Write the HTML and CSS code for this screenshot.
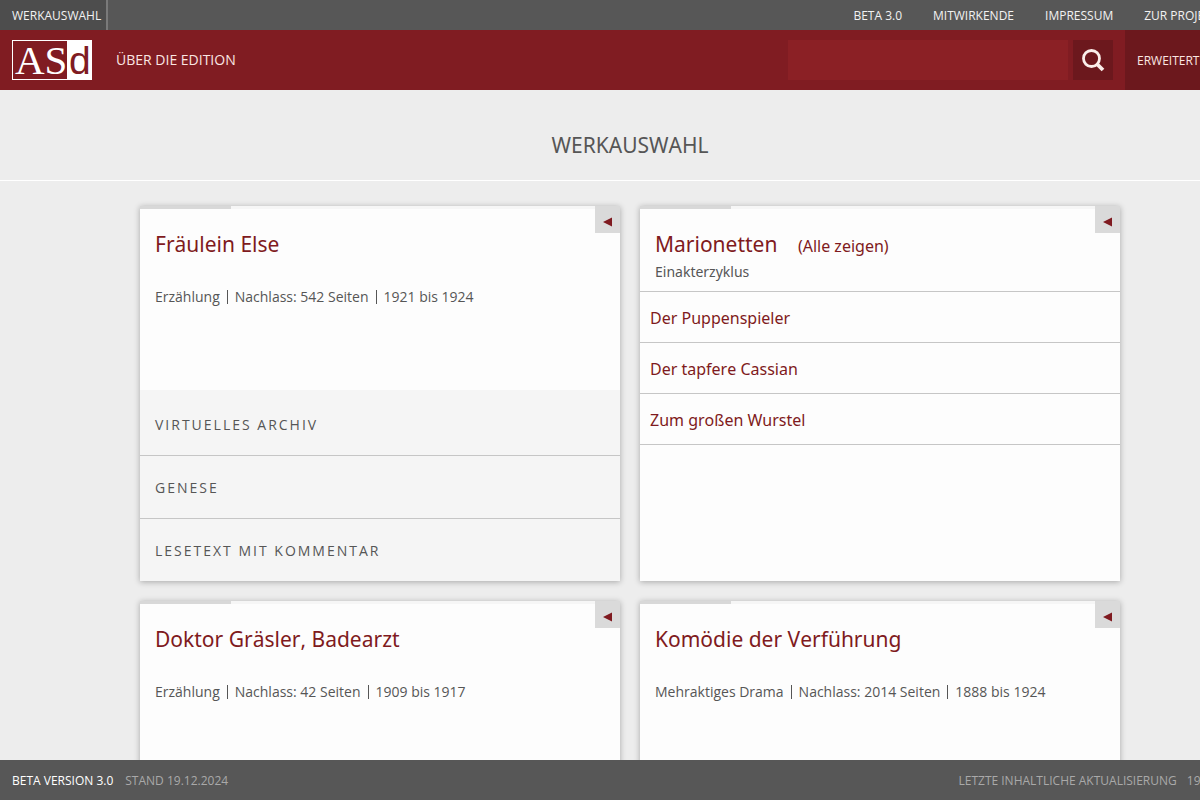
FILE: index.html
```html
<!DOCTYPE html>
<html lang="de">
<head>
<meta charset="utf-8">
<title>Werkauswahl</title>
<link rel="stylesheet" href="styles.css">
</head>
<body>
<div class="page">
  <header class="header">
    <nav class="topbar">
      <a class="topbar-home" href="#">Werkauswahl</a>
      <div class="topbar-links">
        <a href="#">Beta 3.0</a>
        <a href="#">Mitwirkende</a>
        <a href="#">Impressum</a>
        <a href="#">Zur Projektseite</a>
      </div>
    </nav>
    <div class="mainbar">
      <a class="logo" href="#" aria-label="ASd">
        <svg width="80" height="40" viewBox="0 0 80 40">
          <rect x="0.5" y="0.5" width="79" height="39" fill="none" stroke="#fff"/>
          <rect x="55" y="0" width="25" height="40" fill="#fff"/>
          <text class="logo-serif" x="3" y="34">AS</text>
          <text class="logo-sans" x="57" y="34">d</text>
        </svg>
      </a>
      <a class="about" href="#">Über die Edition</a>
      <form class="search">
        <input class="search-input" type="text" aria-label="Suche">
        <button class="search-button" type="button" aria-label="Suchen">
          <svg width="24" height="24" viewBox="0 0 24 24" fill="none" stroke="#fbeeea">
            <circle cx="10.5" cy="10.5" r="8" stroke-width="2.8"/>
            <path d="M15.5 15.5L22 22" stroke-width="3.8"/>
          </svg>
        </button>
      </form>
      <button class="advanced" type="button">Erweiterte Suche</button>
    </div>
  </header>

  <main>
    <h1 class="title">Werkauswahl</h1>
    <div class="cards">
      <article class="card">
        <button class="toggle" type="button" aria-label="Umschalten"><svg width="10" height="10" viewBox="0 0 10 10"><path d="M0 5L9 0.5V9.5Z" fill="#7f1a20"/></svg></button>
        <div class="card-head">
          <h2><a href="#">Fräulein Else</a></h2>
          <ul class="meta"><li>Erzählung</li><li>Nachlass: 542 Seiten</li><li>1921 bis 1924</li></ul>
        </div>
        <div class="sections">
          <a href="#">Virtuelles Archiv</a>
          <a href="#">Genese</a>
          <a href="#">Lesetext mit Kommentar</a>
        </div>
      </article>
      <article class="card">
        <button class="toggle" type="button" aria-label="Umschalten"><svg width="10" height="10" viewBox="0 0 10 10"><path d="M0 5L9 0.5V9.5Z" fill="#7f1a20"/></svg></button>
        <div class="card-head cycle-head">
          <h2><a href="#">Marionetten</a> <a class="show-all" href="#">(Alle zeigen)</a></h2>
          <p class="genre">Einakterzyklus</p>
        </div>
        <div class="works">
          <a href="#">Der Puppenspieler</a>
          <a href="#">Der tapfere Cassian</a>
          <a href="#">Zum großen Wurstel</a>
        </div>
      </article>
      <article class="card">
        <button class="toggle" type="button" aria-label="Umschalten"><svg width="10" height="10" viewBox="0 0 10 10"><path d="M0 5L9 0.5V9.5Z" fill="#7f1a20"/></svg></button>
        <div class="card-head">
          <h2><a href="#">Doktor Gräsler, Badearzt</a></h2>
          <ul class="meta"><li>Erzählung</li><li>Nachlass: 42 Seiten</li><li>1909 bis 1917</li></ul>
        </div>
      </article>
      <article class="card">
        <button class="toggle" type="button" aria-label="Umschalten"><svg width="10" height="10" viewBox="0 0 10 10"><path d="M0 5L9 0.5V9.5Z" fill="#7f1a20"/></svg></button>
        <div class="card-head">
          <h2><a href="#">Komödie der Verführung</a></h2>
          <ul class="meta"><li>Mehraktiges Drama</li><li>Nachlass: 2014 Seiten</li><li>1888 bis 1924</li></ul>
        </div>
      </article>
    </div>
  </main>

  <footer class="footer">
    <span class="version">Beta Version 3.0</span>
    <span>Stand 19.12.2024</span>
    <span class="updated"><span>Letzte inhaltliche Aktualisierung</span><span>19.12.2024</span></span>
  </footer>
</div>
</body>
</html>
```
FILE: styles.css
```css
* {
  box-sizing: border-box;
}

html,
body {
  height: 100%;
  margin: 0;
  overflow: hidden;
}

body {
  background: #ededed;
  color: #565656;
  font: 14px/20px "Noto Sans", sans-serif;
  font-kerning: none;
}

a {
  color: inherit;
  text-decoration: none;
}

button,
input {
  border: 0;
  padding: 0;
  font: inherit;
}

.page {
  display: flex;
  flex-direction: column;
  height: 100%;
  min-width: 1260px;
}

.header,
.footer {
  flex: none;
}

.topbar {
  display: flex;
  justify-content: space-between;
  background: #575757;
  color: #f2f2f2;
  font-family: "Open Sans", "Noto Sans", sans-serif;
  font-size: 12px;
  line-height: 28px;
  text-transform: uppercase;
}

.topbar-home {
  padding: 2px 5px 0 12px;
  background: #4d4d4d;
  border-right: 2px solid #7a7a7a;
}

.topbar-links {
  display: flex;
  gap: 31px;
  padding: 2px 12px 0 0;
}

.mainbar {
  display: flex;
  align-items: center;
  height: 60px;
  padding-left: 12px;
  background: #801c22;
  color: #fbe6e2;
  font-family: "Open Sans", "Noto Sans", sans-serif;
}

.logo,
.logo svg {
  display: block;
}

.logo-serif {
  fill: #fff;
  font: 41px "Liberation Serif", serif;
}

.logo-sans {
  fill: #801c22;
  font: 39px "Liberation Sans", sans-serif;
}

.about {
  margin-left: 24px;
  text-transform: uppercase;
}

.search {
  display: flex;
  gap: 5px;
  margin-left: auto;
}

.search-input {
  width: 280px;
  height: 40px;
  padding: 0 10px;
  background: #8b2025;
  color: #fff;
}

.search-button {
  display: grid;
  place-items: center;
  width: 40px;
  height: 40px;
  background: #6c181d;
}

.advanced {
  align-self: stretch;
  width: 135px;
  margin-left: 12px;
  padding: 2px 0 0 12px;
  background: #6c181d;
  color: #fbe6e2;
  font-size: 12px;
  text-align: left;
  text-transform: uppercase;
  white-space: nowrap;
}

main {
  flex: 1;
  min-height: 0;
  overflow: hidden;
}

.title {
  margin: 0;
  padding: 40px 0 20px;
  border-bottom: 1px solid #fff;
  font-size: 21px;
  font-weight: 400;
  line-height: 30px;
  text-align: center;
  text-transform: uppercase;
}

.cards {
  display: grid;
  grid-template-columns: repeat(2, 480px);
  grid-auto-rows: 375px;
  gap: 20px;
  justify-content: center;
  padding-top: 25px;
}

.card {
  position: relative;
  display: flex;
  flex-direction: column;
  background: #fdfdfd;
  border-top: 3px solid #f6f6f6;
  box-shadow: 0 1px 6px rgba(0, 0, 0, 0.3);
}

.card::before {
  content: "";
  position: absolute;
  top: -3px;
  left: 0;
  width: 91px;
  height: 3px;
  background: #d8d8d8;
}

.toggle {
  position: absolute;
  top: -3px;
  right: 0;
  display: grid;
  place-items: center;
  width: 25px;
  height: 27px;
  padding-top: 5px;
  background: #dadada;
}

.card-head {
  padding: 20px 15px 0;
}

.card h2 {
  margin: 0;
  color: #7f1a20;
  font-size: 21px;
  font-weight: 400;
  line-height: 30px;
}

.show-all {
  margin-left: 15px;
  font-size: 16px;
}

.genre {
  margin: 0;
  line-height: 22px;
}

.cycle-head {
  padding-bottom: 8px;
  border-bottom: 1px solid #c6c6c6;
}

.meta {
  display: flex;
  margin: 0;
  padding: 31px 0 0;
  list-style: none;
  font-family: "Open Sans", "Noto Sans", sans-serif;
  line-height: 14px;
}

.meta li + li {
  margin-left: 7px;
  padding-left: 7px;
  border-left: 1px solid #565656;
}

.works a {
  display: block;
  padding: 2px 10px 0;
  border-bottom: 1px solid #c6c6c6;
  color: #7f1a20;
  font-size: 16px;
  line-height: 48px;
}

.sections {
  margin-top: auto;
  padding-top: 3px;
  background: #f5f5f5;
}

.sections a {
  display: block;
  padding: 2px 15px 0;
  font-family: "Open Sans", "Noto Sans", sans-serif;
  letter-spacing: 2px;
  line-height: 60px;
  text-transform: uppercase;
}

.sections a + a {
  border-top: 1px solid #c6c6c6;
}

.footer {
  display: flex;
  gap: 12px;
  padding: 2px 12px 0;
  background: #575757;
  color: #a9a9a9;
  font-family: "Open Sans", "Noto Sans", sans-serif;
  font-size: 12px;
  line-height: 38px;
  text-transform: uppercase;
}

.version {
  color: #fff;
}

.updated {
  display: flex;
  gap: 10px;
  margin-left: auto;
}
```
